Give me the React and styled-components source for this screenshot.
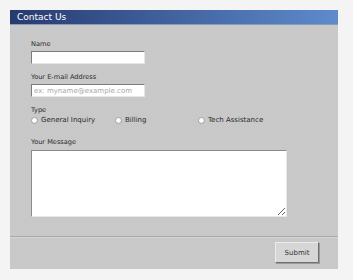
import React from 'react';
import styled, { createGlobalStyle } from 'styled-components';

const GlobalStyle = createGlobalStyle`
    html, body {
        margin: 0;
        padding: 0;
        background: #f4f4f4;
        font-family: "DejaVu Sans", "Liberation Sans", sans-serif;
    }
`

const Page = styled.div`
    padding: 10px 15px 11px 10px;
`
const Panel = styled.div`
    width: 328px;
    background-color: #c9c9c9;
    background-image: repeating-conic-gradient(#c6c6c6 0 25%, #cbcbcb 0 50%);
    background-size: 2px 2px;
    display: flex;
    flex-direction: column;
`
const Header = styled.div`
    height: 15px;
    box-sizing: border-box;
    padding-left: 7px;
    display: flex;
    align-items: center;
    color: #ffffff;
    font-size: 9px;
    background: linear-gradient(to right, #273a6f 0%, #3f5f9b 45%, #5e8bcc 100%);
    border-bottom: 1px solid #8a9ab8;
`
const Body = styled.div`
    padding: 15px 0 19px 21px;
    display: flex;
    flex-direction: column;
`
const Field = styled.div`
    display: flex;
    flex-direction: column;
    gap: ${(props) => props.$gap || 3}px;
    margin-bottom: ${(props) => props.$after || 0}px;
`
const Label = styled.label`
    display: block;
    height: 8px;
    line-height: 8px;
    font-size: 6.6px;
    color: #2a2a2a;
`
const TextInput = styled.input`
    width: 114px;
    height: 13px;
    box-sizing: border-box;
    margin: 0;
    padding: 0 2px;
    font-family: inherit;
    font-size: 7px;
    color: #333;
    background: #ffffff;
    border: 1px solid;
    border-color: #7c7c7c #e6e6e6 #e6e6e6 #7c7c7c;
    outline: none;
    &::placeholder {
        color: #a6a6a6;
    }
`
const RadioRow = styled.div`
    display: grid;
    grid-template-columns: 84px 83px auto;
    height: 8px;
    align-items: center;
`
const RadioOption = styled.div`
    display: flex;
    align-items: center;
    gap: 3px;
    font-size: 7px;
    color: #2a2a2a;
`
const RadioDot = styled.span`
    width: 5px;
    height: 5px;
    border-radius: 50%;
    background: radial-gradient(circle at 40% 40%, #ffffff 0 40%, #d2d2d2 100%);
    border: 0.5px solid #a8a8a8;
`
const MessageBox = styled.textarea`
    width: 256px;
    height: 67px;
    box-sizing: border-box;
    margin: 0;
    padding: 2px;
    font-family: inherit;
    font-size: 7px;
    background: #ffffff;
    border: 1px solid;
    border-color: #8a8a8a #e8e8e8 #e8e8e8 #8a8a8a;
    outline: none;
    resize: both;
`
const Footer = styled.div`
    border-top: 1px solid #a9a9a9;
    box-shadow: inset 0 1px 0 #d6d6d6;
    padding: 5px 19px 6px 0;
    display: flex;
    justify-content: flex-end;
`
const SubmitButton = styled.button`
    width: 44px;
    height: 21px;
    box-sizing: border-box;
    margin: 0;
    padding: 0;
    font-family: inherit;
    font-size: 7px;
    color: #333;
    background: #d6d6d6;
    border: 1px solid;
    border-color: #ececec #6f6f6f #6f6f6f #ececec;
    box-shadow: 1px 1px 0 #9a9a9a;
`

const types = ['General Inquiry', 'Billing', 'Tech Assistance'];

export default function App() {
    return (
        <Page>
            <GlobalStyle />
            <Panel>
                <Header>Contact Us</Header>
                <Body>
                    <Field $after={9}>
                        <Label>Name</Label>
                        <TextInput type="text" />
                    </Field>
                    <Field $after={9}>
                        <Label>Your E-mail Address</Label>
                        <TextInput type="text" placeholder="ex: myname@example.com" />
                    </Field>
                    <Field $gap={2} $after={14}>
                        <Label>Type</Label>
                        <RadioRow>
                            {types.map((t) => (
                                <RadioOption key={t}>
                                    <RadioDot />
                                    {t}
                                </RadioOption>
                            ))}
                        </RadioRow>
                    </Field>
                    <Field $gap={4}>
                        <Label>Your Message</Label>
                        <MessageBox />
                    </Field>
                </Body>
                <Footer>
                    <SubmitButton>Submit</SubmitButton>
                </Footer>
            </Panel>
        </Page>
    );
}
